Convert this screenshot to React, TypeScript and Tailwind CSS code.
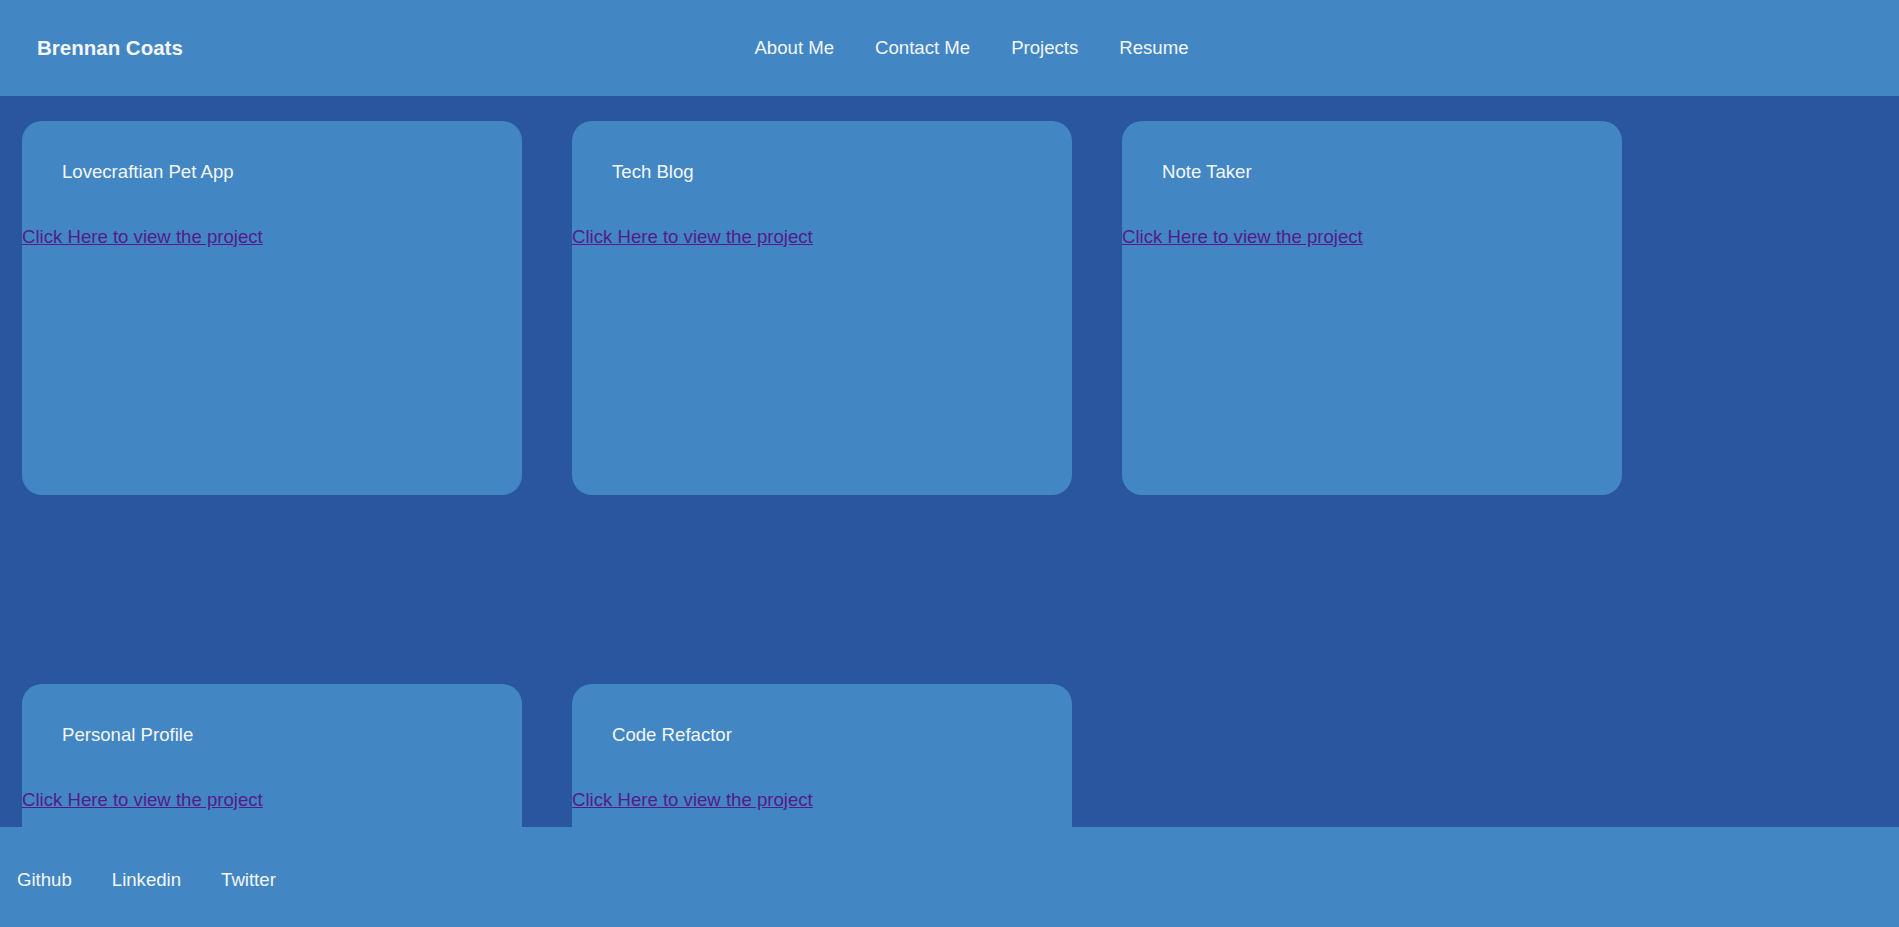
const projects = [
  'Lovecraftian Pet App',
  'Tech Blog',
  'Note Taker',
  'Personal Profile',
  'Code Refactor',
]

const navLinks = ['About Me', 'Contact Me', 'Projects', 'Resume']
const socialLinks = ['Github', 'Linkedin', 'Twitter']

function ProjectCard({ title }: { title: string }) {
  return (
    <div className="h-[374px] rounded-[20px] bg-[#4287c3]">
      <h3 className="pl-[40px] pt-[37px] leading-[28px] text-[18.6px] font-normal text-[#f4f6fa]">{title}</h3>
      <a href="#" className="mt-[37px] block w-fit leading-[28px] text-[18.6px] text-[#551a8b] underline">
        Click Here to view the project
      </a>
    </div>
  )
}

export default function App() {
  return (
    <div className="flex h-screen flex-col overflow-hidden font-['Liberation_Sans',Arial,sans-serif] text-[#f4f6fa]">
      {/* Header */}
      <header className="grid h-[96px] shrink-0 grid-cols-[1fr_auto_1fr] items-center bg-[#4287c3]">
        <div className="pl-[37px] text-[20.5px] font-bold">Brennan Coats</div>
        <nav className="flex gap-[41px] pl-[44px] text-[18.6px]">
          {navLinks.map((link) => (
            <a key={link} href="#">{link}</a>
          ))}
        </nav>
        <div />
      </header>

      {/* Projects */}
      <main className="flex-1 overflow-hidden bg-[#2a56a0] pl-[22px] pt-[25px]">
        <div className="grid grid-cols-[repeat(3,500px)] gap-x-[50px] gap-y-[189px]">
          {projects.map((p) => (
            <ProjectCard key={p} title={p} />
          ))}
        </div>
      </main>

      {/* Footer */}
      <footer className="flex h-[100px] shrink-0 items-center gap-[40px] bg-[#4287c3] pl-[17px] pt-[5px] text-[18.6px]">
        {socialLinks.map((link) => (
          <a key={link} href="#">{link}</a>
        ))}
      </footer>
    </div>
  )
}
